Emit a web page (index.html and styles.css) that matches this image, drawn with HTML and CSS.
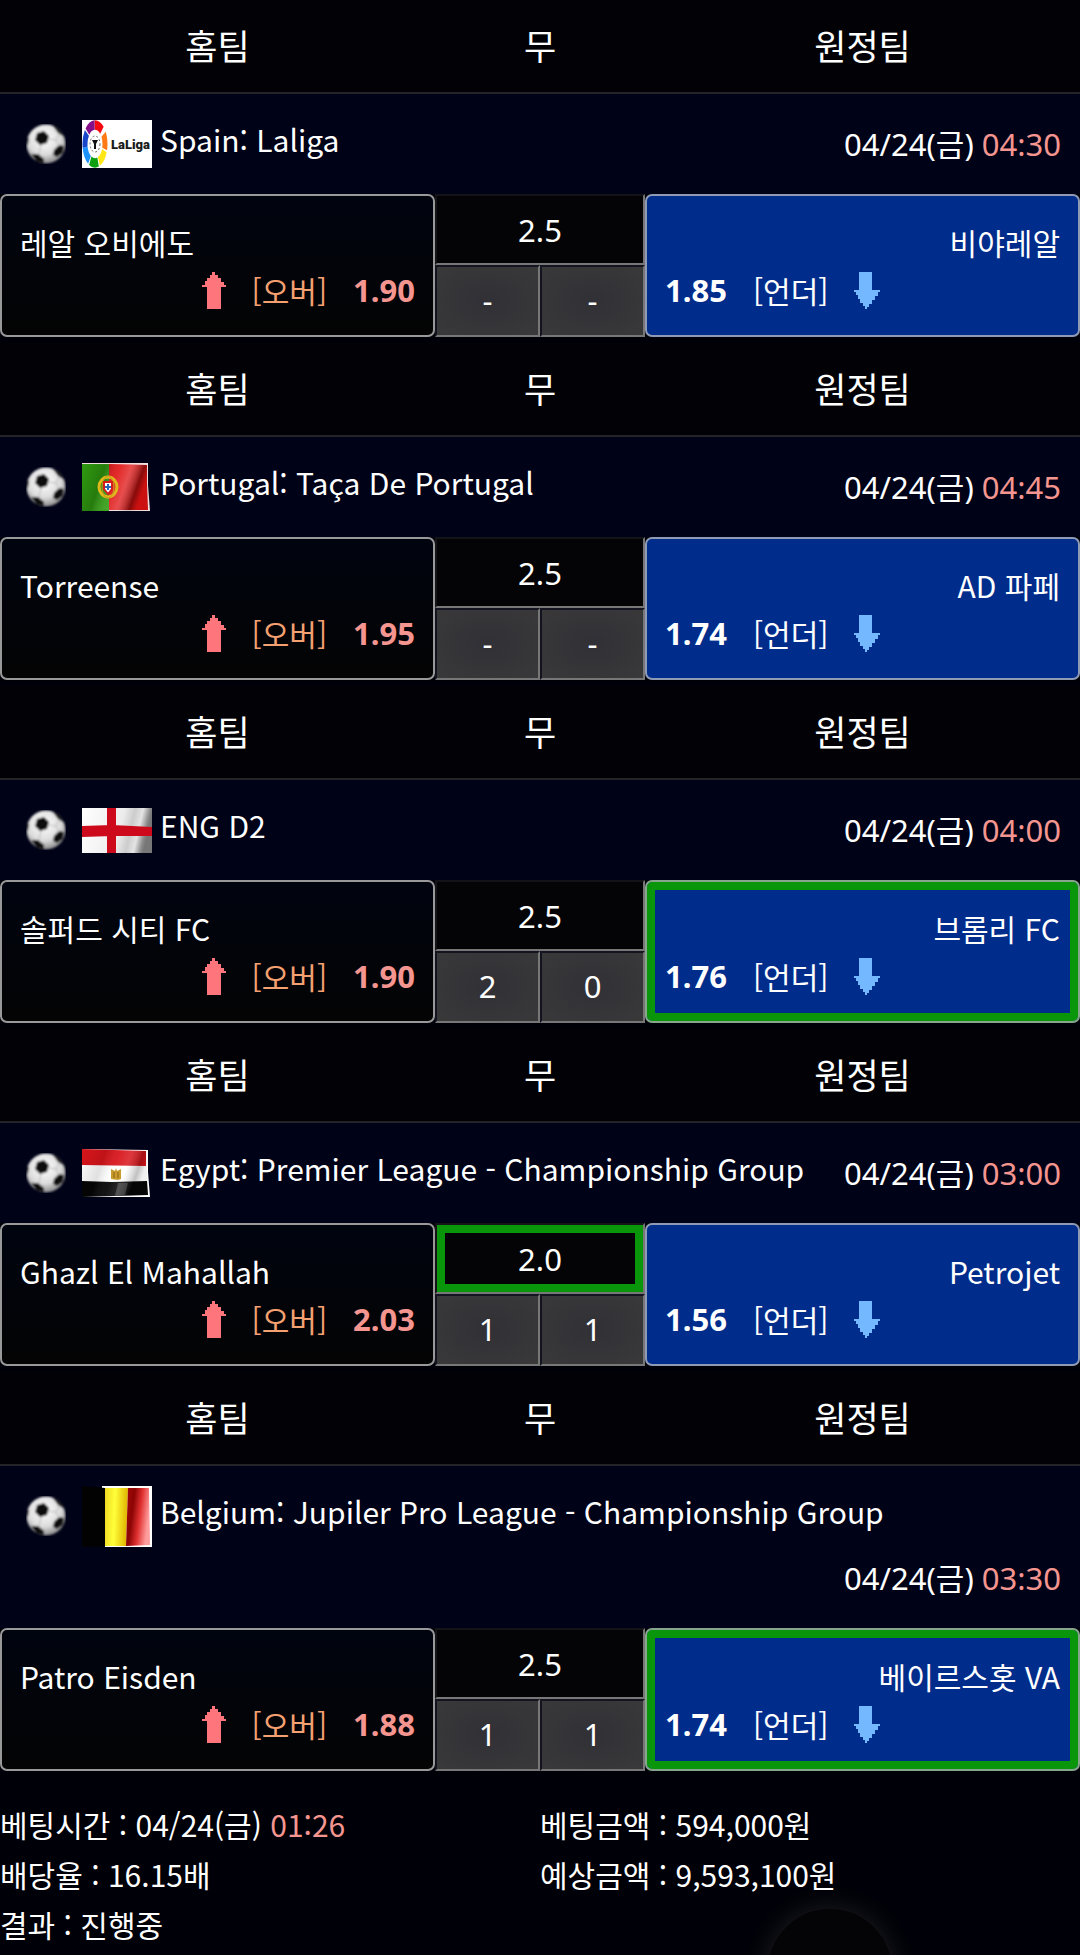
FILE: index.html
```html
<!DOCTYPE html>
<html lang="ko">
  <head>
    <meta charset="UTF-8" />
    <meta name="viewport" content="width=device-width, initial-scale=1.0" />
    <title>베팅내역</title>
    <link rel="stylesheet" href="styles.css">
  </head>
  <body>
    <!-- Shared icons -->
    <svg class="sprite" width="0" height="0" aria-hidden="true">
      <defs>
        <radialGradient id="ballShade" cx="45%" cy="35%" r="65%">
          <stop offset="0%" stop-color="#ffffff" />
          <stop offset="65%" stop-color="#dcdcdc" />
          <stop offset="100%" stop-color="#8c8c8c" />
        </radialGradient>
        <linearGradient id="wave" x1="0" y1="0" x2="1" y2="0.25">
          <stop offset="0%" stop-color="#000" stop-opacity="0" />
          <stop offset="35%" stop-color="#000" stop-opacity="0.2" />
          <stop offset="55%" stop-color="#fff" stop-opacity="0.1" />
          <stop offset="72%" stop-color="#fff" stop-opacity="0.25" />
          <stop offset="90%" stop-color="#000" stop-opacity="0.4" />
          <stop offset="100%" stop-color="#000" stop-opacity="0.1" />
        </linearGradient>
        <filter id="soft" x="-10%" y="-10%" width="120%" height="120%">
          <feGaussianBlur stdDeviation="0.8" />
        </filter>
        <clipPath id="ballClip"><circle cx="20" cy="20" r="19.5" /></clipPath>
        <symbol id="ball" viewBox="0 0 40 40">
          <g filter="url(#soft)">
            <circle cx="20" cy="20" r="19.5" fill="url(#ballShade)" />
            <g clip-path="url(#ballClip)" fill="#0a0a0a">
              <path d="M11 9 L18 7 L23 12 L21 19 L14 21 L9 16 Z" />
              <path d="M28 26 L33 21 L38 22 L37 29 L31 33 L27 31 Z" />
              <path d="M5 30 L12 30 L18 35 L18 39 L11 38 Z" />
              <path d="M27 2 L32 9 L37 12 L42 14 L38 0 Z" />
              <path d="M0 12 L3 14 L2 20 L0 22 Z" />
            </g>
            <path d="M22 15 L30 16 L33 22 M15 21 L13 30 M33 10 L30 16 M18 35 L29 32" fill="none" stroke="#bbb" stroke-width="1" />
          </g>
        </symbol>
        <symbol id="up" viewBox="0 0 24 37">
          <path d="M10 0h3v3h3v3h3v4h3v3h2v2h-5v22H5V15H0v-2h3V9h2V6h3V3h2z" fill="#ff757c" />
        </symbol>
        <symbol id="down" viewBox="0 0 26 37">
          <path d="M5 0h13v18h8v2h-2v4h-3v4h-3v4h-3v3h-2v2h-2v-3H9v-3H6v-4H4v-4H2v-3H0v-2h5z" fill="#74b8ff" />
        </symbol>
      </defs>
    </svg>

    <main class="bets">
      <section class="game">
        <div class="row head"><span>홈팀</span><span>무</span><span>원정팀</span></div>
        <div class="league">
          <svg class="ball" aria-hidden="true"><use href="#ball" /></svg>
          <svg class="flag" width="70" height="48" viewBox="0 0 70 48" aria-hidden="true">
            <rect width="70" height="48" fill="#fff" />
            <g transform="translate(13 24) scale(1 1.9)" fill="none" stroke-width="5">
              <circle r="10" pathLength="70" stroke="#f40a10" stroke-dasharray="9 61" stroke-dashoffset="18" />
              <circle r="10" pathLength="70" stroke="#ff7a14" stroke-dasharray="9 61" stroke-dashoffset="6" />
              <circle r="10" pathLength="70" stroke="#ffe616" stroke-dasharray="9 61" stroke-dashoffset="-4" />
              <circle r="10" pathLength="70" stroke="#0aa00f" stroke-dasharray="9 61" stroke-dashoffset="-14" />
              <circle r="10" pathLength="70" stroke="#1c92ff" stroke-dasharray="9 61" stroke-dashoffset="-24" />
              <circle r="10" pathLength="70" stroke="#1747c8" stroke-dasharray="9 61" stroke-dashoffset="-33" />
              <circle r="10" pathLength="70" stroke="#86108c" stroke-dasharray="9 61" stroke-dashoffset="-43" />
            </g>
            <ellipse cx="13" cy="24" rx="5" ry="8" fill="none" stroke="#666" stroke-dasharray="2 2" />
            <path d="M10 20h6l-2 4v5h-2v-5z" fill="#111" />
            <text class="laliga" x="29" y="29">LaLiga</text>
          </svg>
          <span class="title">Spain: Laliga</span>
          <time class="date">04/24(금) <em>04:30</em></time>
        </div>
        <div class="row">
          <div class="team home">
            <div class="name">레알 오비에도</div>
            <div class="odds"><svg class="up" aria-hidden="true"><use href="#up" /></svg><span class="kind">[오버]</span><b>1.90</b></div>
          </div>
          <div class="mid">
            <div class="line">2.5</div>
            <div class="score">-</div>
            <div class="score">-</div>
          </div>
          <div class="team away">
            <div class="name">비야레알</div>
            <div class="odds"><b>1.85</b><span class="kind">[언더]</span><svg class="down" aria-hidden="true"><use href="#down" /></svg></div>
          </div>
        </div>
      </section>

      <section class="game">
        <div class="row head"><span>홈팀</span><span>무</span><span>원정팀</span></div>
        <div class="league">
          <svg class="ball" aria-hidden="true"><use href="#ball" /></svg>
          <svg class="flag" width="70" height="48" viewBox="0 0 70 48" aria-hidden="true">
            <path d="M0 0 L66 0 L66 22 L68 48 L0 48 Z" fill="#f2dede" />
            <path d="M0 1 L27 1 L27 48 L0 48 Z" fill="#2f9a10" />
            <path d="M27 1 L65 2 L65 22 L66 47 L27 47 Z" fill="#e01212" />
            <path d="M0 1 L65 2 L66 47 L0 48 Z" fill="url(#wave)" />
            <ellipse cx="26" cy="24" rx="9" ry="10" fill="none" stroke="#e0b81c" stroke-width="3" />
            <ellipse cx="26" cy="24" rx="6" ry="11" fill="none" stroke="#c99b18" />
            <path d="M22 19h8v7l-4 5-4-5z" fill="#fff" stroke="#d81c1c" stroke-width="2" />
            <path d="M26 21v6M23 24h6" stroke="#2a66b8" stroke-width="2" />
          </svg>
          <span class="title">Portugal: Taça De Portugal</span>
          <time class="date">04/24(금) <em>04:45</em></time>
        </div>
        <div class="row">
          <div class="team home">
            <div class="name">Torreense</div>
            <div class="odds"><svg class="up" aria-hidden="true"><use href="#up" /></svg><span class="kind">[오버]</span><b>1.95</b></div>
          </div>
          <div class="mid">
            <div class="line">2.5</div>
            <div class="score">-</div>
            <div class="score">-</div>
          </div>
          <div class="team away">
            <div class="name">AD 파페</div>
            <div class="odds"><b>1.74</b><span class="kind">[언더]</span><svg class="down" aria-hidden="true"><use href="#down" /></svg></div>
          </div>
        </div>
      </section>

      <section class="game">
        <div class="row head"><span>홈팀</span><span>무</span><span>원정팀</span></div>
        <div class="league">
          <svg class="ball" aria-hidden="true"><use href="#ball" /></svg>
          <svg class="flag" width="70" height="45" viewBox="0 0 70 45" aria-hidden="true">
            <defs>
              <linearGradient id="cloth" x1="0" y1="0" x2="1" y2="0.15">
                <stop offset="0%" stop-color="#fff" />
                <stop offset="60%" stop-color="#ececec" />
                <stop offset="75%" stop-color="#cccccc" />
                <stop offset="86%" stop-color="#e4e4e4" />
                <stop offset="96%" stop-color="#8a8a8a" />
                <stop offset="100%" stop-color="#777" />
              </linearGradient>
            </defs>
            <rect width="70" height="45" fill="url(#cloth)" />
            <path d="M25 0h9v45h-9z M0 18 L30 17 L70 19 L70 28 L30 28 L0 29 Z" fill="#cc0a1c" />
          </svg>
          <span class="title">ENG D2</span>
          <time class="date">04/24(금) <em>04:00</em></time>
        </div>
        <div class="row">
          <div class="team home">
            <div class="name">솔퍼드 시티 FC</div>
            <div class="odds"><svg class="up" aria-hidden="true"><use href="#up" /></svg><span class="kind">[오버]</span><b>1.90</b></div>
          </div>
          <div class="mid">
            <div class="line">2.5</div>
            <div class="score">2</div>
            <div class="score">0</div>
          </div>
          <div class="team away picked">
            <div class="name">브롬리 FC</div>
            <div class="odds"><b>1.76</b><span class="kind">[언더]</span><svg class="down" aria-hidden="true"><use href="#down" /></svg></div>
          </div>
        </div>
      </section>

      <section class="game">
        <div class="row head"><span>홈팀</span><span>무</span><span>원정팀</span></div>
        <div class="league">
          <svg class="ball" aria-hidden="true"><use href="#ball" /></svg>
          <svg class="flag" width="70" height="48" viewBox="0 0 70 48" aria-hidden="true">
            <path d="M0 0 L66 1 L66 23 L68 48 L0 48 Z" fill="#fff" />
            <path d="M0 0 L64 2 L64 17 L0 16 Z" fill="#d8151b" />
            <path d="M0 32 L30 33 L65 32 L66 46 L0 48 Z" fill="#050505" />
            <path d="M36 34 L46 34 L43 46 L33 47 Z" fill="#555" opacity="0.6" />
            <path d="M0 0 L64 2 L66 46 L0 48 Z" fill="url(#wave)" opacity="0.6" />
            <path d="M29 20 L33 22 L34 19 L35 22 L39 20 L39 30 L36 31 L29 30 Z" fill="#c99a2c" />
            <path d="M32 23v6M36 23v6" stroke="#8a6414" />
          </svg>
          <span class="title">Egypt: Premier League - Championship Group</span>
          <time class="date">04/24(금) <em>03:00</em></time>
        </div>
        <div class="row">
          <div class="team home">
            <div class="name">Ghazl El Mahallah</div>
            <div class="odds"><svg class="up" aria-hidden="true"><use href="#up" /></svg><span class="kind">[오버]</span><b>2.03</b></div>
          </div>
          <div class="mid">
            <div class="line picked">2.0</div>
            <div class="score">1</div>
            <div class="score">1</div>
          </div>
          <div class="team away">
            <div class="name">Petrojet</div>
            <div class="odds"><b>1.56</b><span class="kind">[언더]</span><svg class="down" aria-hidden="true"><use href="#down" /></svg></div>
          </div>
        </div>
      </section>

      <section class="game">
        <div class="row head"><span>홈팀</span><span>무</span><span>원정팀</span></div>
        <div class="league">
          <svg class="ball" aria-hidden="true"><use href="#ball" /></svg>
          <svg class="flag" width="70" height="61" viewBox="0 0 70 61" aria-hidden="true">
            <defs>
              <linearGradient id="belYellow" x1="0" y1="0" x2="1" y2="0.1">
                <stop offset="0%" stop-color="#f0d820" />
                <stop offset="45%" stop-color="#ffff3a" />
                <stop offset="100%" stop-color="#e0b400" />
              </linearGradient>
              <linearGradient id="belRed" x1="0" y1="0" x2="1" y2="0.3">
                <stop offset="0%" stop-color="#a80808" />
                <stop offset="35%" stop-color="#8c0404" />
                <stop offset="65%" stop-color="#e03030" />
                <stop offset="100%" stop-color="#ff9c9c" />
              </linearGradient>
            </defs>
            <path d="M20 0 L70 0 L70 61 L20 61 Z" fill="#fff" />
            <path d="M0 0 L23 2 L23 61 L0 61 Z" fill="#020202" />
            <path d="M23 2 L46 2 L44 60 L23 60 Z" fill="url(#belYellow)" />
            <path d="M46 2 L67 2 L68 59 L44 60 Z" fill="url(#belRed)" />
          </svg>
          <span class="title">Belgium: Jupiler Pro League - Championship Group</span>
          <time class="date">04/24(금) <em>03:30</em></time>
        </div>
        <div class="row">
          <div class="team home">
            <div class="name">Patro Eisden</div>
            <div class="odds"><svg class="up" aria-hidden="true"><use href="#up" /></svg><span class="kind">[오버]</span><b>1.88</b></div>
          </div>
          <div class="mid">
            <div class="line">2.5</div>
            <div class="score">1</div>
            <div class="score">1</div>
          </div>
          <div class="team away picked">
            <div class="name">베이르스홋 VA</div>
            <div class="odds"><b>1.74</b><span class="kind">[언더]</span><svg class="down" aria-hidden="true"><use href="#down" /></svg></div>
          </div>
        </div>
      </section>

      <section class="summary">
        <div>베팅시간 : 04/24(금) <em>01:26</em></div>
        <div>베팅금액 : 594,000원</div>
        <div>배당율 : 16.15배</div>
        <div>예상금액 : 9,593,100원</div>
        <div>결과 : 진행중</div>
      </section>
    </main>

    <button class="float-btn" type="button" aria-label="메뉴"></button>
  </body>
</html>
```
FILE: styles.css
```css
* {
  box-sizing: border-box;
}

body {
  margin: 0;
  background: #000008;
  color: #fff;
  font-family: "Noto Sans CJK KR", sans-serif;
  font-size: 30px;
}

em {
  font-style: normal;
  color: #f4958f;
}

.sprite {
  position: absolute;
}

.game {
  margin-bottom: 6px;
}

/* home / draw / away columns */
.row {
  display: grid;
  grid-template-columns: 29fr 14fr 29fr;
}

.head {
  height: 94px;
  border-bottom: 2px solid #242428;
  background: #020206;
  font-size: 35px;
  line-height: 90px;
  text-align: center;
}

/* League bar, the date drops to a second line when the title is long */
.league {
  display: flex;
  flex-wrap: wrap;
  align-items: center;
  padding: 19px 19px 19px 26px;
  background: #000217;
}

.ball {
  width: 40px;
  height: 40px;
  margin-right: 16px;
}

.flag {
  margin-right: 8px;
}

.laliga {
  fill: #1a1a1a;
  font-family: Roboto, sans-serif;
  font-size: 13px;
  font-weight: 900;
}

.title {
  padding-bottom: 10px;
  line-height: 52px;
}

.date {
  margin-left: auto;
  font-family: "Noto Sans", "Noto Sans CJK KR", sans-serif;
  font-size: 31px;
  line-height: 62px;
}

.team {
  padding: 22px 18px 21px;
  border: 2px solid #999;
  border-radius: 7px;
  line-height: 48px;
}

.home {
  background: linear-gradient(#00040f, #040404);
}

.away {
  border-color: #8f9ab4;
  background: #002c8b;
}

.away .name {
  text-align: right;
}

.odds {
  display: flex;
  align-items: center;
  gap: 26px;
}

.odds b {
  font-family: "Noto Sans", sans-serif;
  font-size: 31px;
}

.home .odds {
  justify-content: flex-end;
  color: #f5a070;
}

.home .odds b {
  color: #f4958f;
}

.up {
  width: 24px;
  height: 37px;
}

.down {
  width: 26px;
  height: 37px;
}

.mid {
  display: grid;
  grid-template-columns: 1fr 1fr;
  grid-template-rows: 71px 1fr;
  font-family: "Noto Sans", sans-serif;
  font-size: 31px;
  text-align: center;
}

.line {
  grid-column: 1 / 3;
  border: 2px solid #141418;
  border-right-color: #777;
  border-bottom-color: #777;
  background: #040406;
  line-height: 68px;
}

.score {
  border: 2px solid #141420;
  border-right-color: #777;
  border-bottom-color: #777;
  background: radial-gradient(#313036, #39393a);
  line-height: 66px;
}

.picked {
  box-shadow: inset 0 0 0 8px #0a960a;
}

.away.picked {
  border-color: #86a58c;
}

.summary {
  display: grid;
  grid-template-columns: 1fr 1fr;
  padding-top: 22px;
  line-height: 50px;
}

/* Round button that peeks out from the bottom edge */
.float-btn {
  position: fixed;
  right: 186px;
  bottom: -80px;
  width: 128px;
  height: 128px;
  padding: 0;
  border: 2px solid #0e0e12;
  border-radius: 50%;
  background: #040407;
  box-shadow: 0 0 24px rgba(255, 255, 255, 0.1);
}
```
